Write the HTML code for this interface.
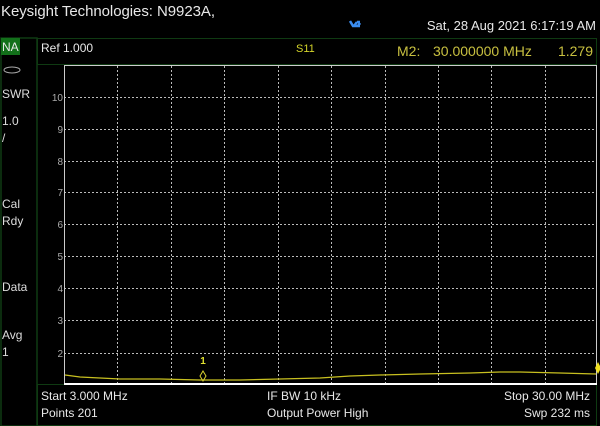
<!DOCTYPE html><html><head><style>body{margin:0;background:#000;width:600px;height:426px;overflow:hidden}svg{display:block}text{font-family:"Liberation Sans",sans-serif}</style></head><body>
<svg width="600" height="426" viewBox="0 0 600 426">
<rect width="600" height="426" fill="#000"/>
<text x="1" y="16" fill="#e8e8e8" font-size="15" textLength="214">Keysight Technologies: N9923A,</text>
<text x="596" y="30" fill="#e8e8e8" font-size="13" text-anchor="end">Sat, 28 Aug 2021 6:17:19 AM</text>
<path d="M350 21 l3 5 h5 l2 -3 M354 26 l3 -4 M357 22 h3 M357 26 h3" stroke="#3a8df0" stroke-width="2.5" fill="none"/>
<rect x="1" y="38" width="36" height="388" fill="none" stroke="#0f3a12" stroke-width="1.5"/>
<rect x="1" y="38" width="19" height="17" fill="#12701a"/>
<text x="2" y="51" fill="#e8e8e8" font-size="12">NA</text>
<ellipse cx="12" cy="70" rx="8" ry="3" fill="none" stroke="#aaa"/>
<text x="2" y="98" fill="#ddd" font-size="12">SWR</text>
<text x="2" y="125" fill="#ddd" font-size="12">1.0</text>
<text x="2" y="142" fill="#ddd" font-size="12">/</text>
<text x="2" y="208" fill="#ddd" font-size="12">Cal</text>
<text x="2" y="225" fill="#ddd" font-size="12">Rdy</text>
<text x="2" y="291" fill="#ddd" font-size="12">Data</text>
<text x="2" y="339" fill="#ddd" font-size="12">Avg</text>
<text x="2" y="356" fill="#ddd" font-size="12">1</text>
<rect x="37.5" y="38.5" width="559" height="26" fill="none" stroke="#0f3a12"/>
<rect x="37.5" y="384.5" width="559" height="41" fill="none" stroke="#0f3a12"/>
<text x="41" y="52" fill="#e8e8e8" font-size="12">Ref 1.000</text>
<text x="296" y="52" fill="#d4d42a" font-size="11">S11</text>
<text x="397" y="56" fill="#c8c040" font-size="14">M2:</text>
<text x="433" y="56" fill="#c8c040" font-size="14">30.000000 MHz</text>
<text x="593" y="56" fill="#c8c040" font-size="14" text-anchor="end">1.279</text>
<g stroke="#bbb" stroke-dasharray="2,2" stroke-width="1">
<path d="M117.5 66V384M171.5 66V384M224.5 66V384M278.5 66V384M331.5 66V384M385.5 66V384M438.5 66V384M491.5 66V384M545.5 66V384"/>
<path d="M64 97.5H597M64 129.5H597M64 161.5H597M64 192.5H597M64 224.5H597M64 256.5H597M64 288.5H597M64 320.5H597M64 353.5H597"/>
</g>
<rect x="64.5" y="65.5" width="532" height="318" fill="none" stroke="#ccc"/>
<line x1="64" y1="384" x2="597" y2="384" stroke="#fff" stroke-width="2"/>
<g fill="#aaa" font-size="10" text-anchor="end">
<text x="63" y="101">10</text><text x="63" y="133">9</text><text x="63" y="165">8</text><text x="63" y="196">7</text><text x="63" y="228">6</text><text x="63" y="260">5</text><text x="63" y="292">4</text><text x="63" y="324">3</text><text x="63" y="357">2</text>
</g>
<polyline points="65,375 80,377 120,379 160,379 200,380 240,380 280,379 320,378 350,376 380,375 420,374 470,373 500,372 520,372 560,373 596,374" fill="none" stroke="#c8c020" stroke-width="1.3"/>
<path d="M203 371 l3 5 -3 5 -3 -5z" fill="none" stroke="#d8d030"/>
<text x="203" y="364" fill="#e0e030" font-size="10" text-anchor="middle" font-weight="bold">1</text>
<path d="M598 362 l3 6 -3 6 -3 -6z" fill="#f0e020"/>
<g fill="#e8e8e8" font-size="12">
<text x="41" y="400">Start 3.000 MHz</text><text x="41" y="417">Points 201</text>
<text x="267" y="400">IF BW 10 kHz</text><text x="267" y="417">Output Power High</text>
<text x="590" y="400" text-anchor="end">Stop 30.00 MHz</text><text x="590" y="417" text-anchor="end">Swp 232 ms</text>
</g>
</svg></body></html>
